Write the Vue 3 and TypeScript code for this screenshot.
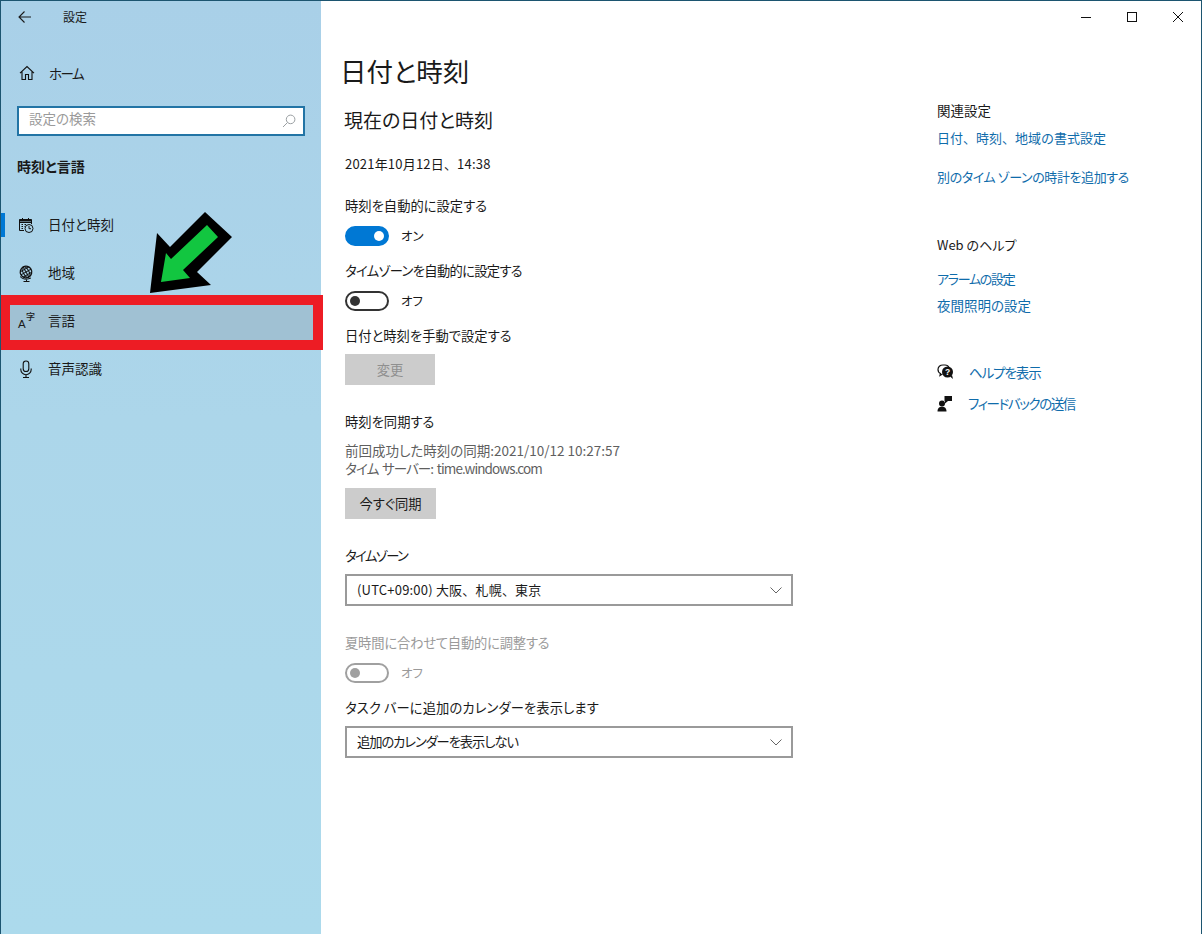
<script setup lang="ts">
const navItems = [
  { id: 'date', label: '日付と時刻', active: true, hover: false },
  { id: 'region', label: '地域', active: false, hover: false },
  { id: 'lang', label: '言語', active: false, hover: true },
  { id: 'voice', label: '音声認識', active: false, hover: false },
]
</script>

<template>
  <div class="window">
    <aside class="side">
      <div class="titlebar">
        <svg class="back" width="16" height="16" viewBox="0 0 16 16"><path d="M14 8H2M7.500 2.500 2 8l5.500 5.500" fill="none" stroke="#1a1a1a" stroke-width="1.100"/></svg>
        <span class="apptitle">設定</span>
      </div>
      <div class="home">
        <svg width="16" height="16" viewBox="0 0 16 16"><path d="M1 8.200 8 1.500l7 6.700M3 6.500V14.500H6.500V9.500H9.500V14.500H13V6.500" fill="none" stroke="#111" stroke-width="1.100"/></svg>
        <span class="home-label">ホーム</span>
      </div>
      <div class="search">
        <span>設定の検索</span>
        <svg width="14" height="14" viewBox="0 0 14 14"><circle cx="8.600" cy="5.400" r="4.300" fill="none" stroke="#9a9fa2"/><path d="M5.500 8.500 1 13" stroke="#9a9fa2"/></svg>
      </div>
      <div class="group">時刻と言語</div>
      <nav class="nav">
        <div v-for="item in navItems" :key="item.id" class="nav-item" :class="{ hover: item.hover }">
          <i v-if="item.active" class="marker"></i>
          <svg v-if="item.id === 'date'" width="16" height="17" viewBox="0 0 16 17" fill="none" stroke="#111"><path d="M6 13.500H1.500V2.500H13.500V7M1.500 5.500H13.500M4.500 1V3M10.500 1V3"/><path d="M1.500 3.500H13.500" stroke-width="2"/><path d="M3.500 7.500h1.500M6.500 7.500H8M3.500 9.500h1.500M6.500 9.500H7M3.500 11.500h1.500" /><circle cx="11" cy="11.500" r="4" fill="#acd4ea"/><path d="M11 9v2.700h2"/></svg>
          <svg v-else-if="item.id === 'region'" width="16" height="17" viewBox="0 0 16 17" fill="none" stroke="#111"><g transform="rotate(-30 8 7)"><circle cx="8" cy="7" r="5.800" stroke-width="1.200"/><ellipse cx="8" cy="7" rx="2.800" ry="5.800"/><path d="M2.200 7h11.600M3 4h10M3 10h10M8 1.200v11.600"/></g><path d="M2 11.500Q6 16 13 13M8.500 14.500v2M5.500 16.500h6"/></svg>
          <svg v-else-if="item.id === 'voice'" width="16" height="18" viewBox="0 0 16 18" fill="none" stroke="#111" stroke-width="1.100"><rect x="5.200" y="1" width="5.600" height="10.500" rx="2.800"/><path d="M2.800 8.500V9.500a5.200 5.200 0 0 0 10.400 0V8.500M8 14.700V17.500M5 17.500h6"/></svg>
          <span v-else class="lang-icon"><b>A</b><em>字</em></span>
          <span class="nav-label">{{ item.label }}</span>
        </div>
      </nav>
    </aside>

    <main class="main">
      <div class="caption">
        <span class="cap"><svg width="12" height="12" viewBox="0 0 12 12"><path d="M1 6.500h10" stroke="#111"/></svg></span>
        <span class="cap"><svg width="12" height="12" viewBox="0 0 12 12"><rect x="1.500" y="1.500" width="9" height="9" fill="none" stroke="#111"/></svg></span>
        <span class="cap"><svg width="12" height="12" viewBox="0 0 12 12"><path d="M1 1l10 10M11 1 1 11" stroke="#111" fill="none"/></svg></span>
      </div>
      <div class="columns">
        <section class="content">
          <h1>日付と時刻</h1>
          <h2>現在の日付と時刻</h2>
          <p class="row now">2021年10月12日、14:38</p>
          <p class="row l1">時刻を自動的に設定する</p>
          <div class="toggle-row"><span class="toggle on"><i></i></span><span class="state">オン</span></div>
          <p class="row l2 tight">タイムゾーンを自動的に設定する</p>
          <div class="toggle-row"><span class="toggle"><i></i></span><span class="state">オフ</span></div>
          <p class="row l2">日付と時刻を手動で設定する</p>
          <button class="btn disabled">変更</button>
          <p class="row l3">時刻を同期する</p>
          <p class="meta first">前回成功した時刻の同期:2021/10/12 10:27:57</p>
          <p class="meta second">タイム サーバー: time.windows.com</p>
          <button class="btn sync">今すぐ同期</button>
          <p class="row l4 tz">タイムゾーン</p>
          <div class="select">
            <span class="tz-value">(UTC+09:00) 大阪、札幌、東京</span>
            <svg width="12" height="7" viewBox="0 0 12 7"><path d="M.5.5 6 6 11.500.5" fill="none" stroke="#666"/></svg>
          </div>
          <p class="row l5 dim dst">夏時間に合わせて自動的に調整する</p>
          <div class="toggle-row dim"><span class="toggle off-dim"><i></i></span><span class="state">オフ</span></div>
          <p class="row l2 task">タスク バーに追加のカレンダーを表示します</p>
          <div class="select">
            <span class="cal-value">追加のカレンダーを表示しない</span>
            <svg width="12" height="7" viewBox="0 0 12 7"><path d="M.5.5 6 6 11.500.5" fill="none" stroke="#666"/></svg>
          </div>
        </section>
        <section class="related">
          <h3>関連設定</h3>
          <a class="link a1">日付、時刻、地域の書式設定</a>
          <a class="link a2">別のタイム ゾーンの時計を追加する</a>
          <h3 class="web">Web のヘルプ</h3>
          <a class="link a3">アラームの設定</a>
          <a class="link a4">夜間照明の設定</a>
          <div class="help first-help">
            <svg width="17" height="16" viewBox="0 0 17 16"><path d="M6 1C3 1 1 3 1 5.500 1 7.500 2 8.800 3.500 9.500L3 11.500l2.500-1.500" fill="none" stroke="#111" stroke-width="1.200"/><path d="M6 1h2c2 0 3.500 1 4 2.500" fill="none" stroke="#111" stroke-width="1.200"/><circle cx="10.500" cy="8" r="5.500" fill="#111"/><path d="M13 12.500 16 15l-1-4z" fill="#111"/><text x="10.500" y="11" font-size="8.500" font-weight="700" text-anchor="middle" fill="#fff" font-family="Liberation Sans">?</text></svg>
            <a class="link h1l">ヘルプを表示</a>
          </div>
          <div class="help second-help">
            <svg width="16" height="17" viewBox="0 0 16 17"><path d="M7.500 1H15V6H11L8 8.500V6H7.500z" fill="#111"/><circle cx="5" cy="8.500" r="3" fill="#111"/><path d="M0.500 16.500c0-3.500 2-4.800 4.500-4.800s4.500 1.300 4.500 4.800z" fill="#111"/></svg>
            <a class="link h2l">フィードバックの送信</a>
          </div>
        </section>
      </div>
    </main>

    <div class="callout" aria-hidden="true"></div>
    <svg class="arrow" width="100" height="100" viewBox="0 0 100 100" aria-hidden="true">
      <path d="M10 83 17 23 30 37 65 2 92 27 57 62 71 75z" fill="#000"/>
      <path d="M67 15 78 27 43 60 50 68 21 72 26 43 31 49z" fill="#12c640"/>
    </svg>
  </div>
</template>

<style>
html, body { margin: 0; background: #fff; }
</style>

<style scoped>
* { box-sizing: border-box; }
.window {
  position: relative;
  width: 1202px;
  height: 934px;
  display: flex;
  overflow: hidden;
  border: 1px solid #1c5570;
  border-bottom: 0;
  background: #fff;
  font-family: "Noto Sans CJK JP", "Noto Sans", sans-serif;
  font-feature-settings: "palt";
  font-size: 13.300px;
  color: #1a1a1a;
}
.side {
  width: 320px;
  flex: none;
  background: linear-gradient(180deg, #a9d0e8 0%, #acd6ea 45%, #acdaec 100%);
}
.titlebar { height: 32px; display: flex; align-items: center; padding-left: 16px; }
.apptitle { margin: -2px 0 0 30px; font-size: 12px; }
.home { height: 48px; margin-top: 16px; display: flex; align-items: center; padding-left: 18px; gap: 14px; font-size: 13.500px; }
.home-label { letter-spacing: -1.500px; }
.search {
  margin: 9px 16px 0 16px;
  height: 30px;
  border: 2px solid #2274a5;
  background: #fff;
  display: flex;
  align-items: center;
  justify-content: space-between;
  padding: 0 7px 0 10px;
  color: #9a9a9a;
  font-size: 13.500px;
}
.search span { margin-top: -6px; }
.group { margin: 17px 0 0 16px; height: 26px; line-height: 26px; font-size: 14px; font-weight: 700; }
.nav { margin-top: 22px; }
.nav-item { position: relative; height: 48px; display: flex; align-items: center; padding-left: 17px; gap: 14px; font-size: 13.500px; }
.nav-item.hover { background: #a0c1d3; }
.marker { position: absolute; left: 0; top: 12px; width: 4px; height: 24px; background: #0078d4; }
.nav-label { margin-top: -2px; }
.lang-icon { position: relative; width: 16px; height: 16px; display: block; }
.lang-icon b { position: absolute; left: 0; top: 5px; font: 400 11.500px/12px "Liberation Sans", sans-serif; }
.lang-icon em { position: absolute; left: 8px; top: -1px; font-style: normal; font-size: 9px; font-weight: 500; line-height: 10px; }

.main { flex: 1; min-width: 0; display: flex; flex-direction: column; }
.caption { height: 32px; display: flex; justify-content: flex-end; }
.cap { width: 46px; height: 32px; display: flex; align-items: center; justify-content: center; }
.columns { display: flex; }
.content { width: 616px; flex: none; padding-left: 24px; display: flex; flex-direction: column; align-items: flex-start; }
h1 { margin: 18px 0 0 -5px; height: 40px; line-height: 40px; font-size: 26.500px; font-weight: 400; }
h2 { margin: 15px 0 0 -1px; height: 28px; line-height: 28px; font-size: 19px; font-weight: 400; }
p { margin: 0; }
.row { height: 20px; line-height: 20px; }
.now { margin-top: 20px; font-feature-settings: normal; font-size: 13px; letter-spacing: .2px; }
.l1 { margin-top: 22px; }
.l2 { margin-top: 15px; }
.l3 { margin-top: 27px; }
.l4 { margin-top: 27px; }
.l5 { margin-top: 27px; }
.tight { letter-spacing: -.7px; }
.tz { letter-spacing: -1.600px; }
.dst { letter-spacing: -.2px; }
.task { letter-spacing: .1px; }
.toggle-row { height: 20px; margin-top: 10px; display: flex; align-items: center; gap: 12px; }
.state { font-size: 12.500px; margin-top: -2px; }
.toggle { width: 44px; height: 20px; border-radius: 10px; border: 2px solid #333; position: relative; display: block; }
.toggle i { position: absolute; left: 3px; top: 3px; width: 10px; height: 10px; border-radius: 50%; background: #333; }
.toggle.on { background: #0078d4; border-color: #0078d4; }
.toggle.on i { left: auto; right: 3px; background: #fff; }
.toggle.off-dim { border-color: #a0a0a0; }
.toggle.off-dim i { background: #a0a0a0; }
.dim { color: #9a9a9a; }
.btn { border: 0; font: inherit; font-feature-settings: inherit; height: 31px; background: #ccc; color: #1a1a1a; padding: 0; }
.btn.disabled { width: 90px; margin-top: 8px; color: #8f8f8f; }
.btn.sync { width: 91px; margin-top: 11px; }
.meta { height: 18px; line-height: 18px; color: #5f5f5f; font-size: 13.500px; }
.meta.first { margin-top: 9px; }
.meta.second { letter-spacing: -.9px; word-spacing: 1.500px; }
.select {
  width: 448px;
  height: 32px;
  margin-top: 8px;
  border: 2px solid #9a9a9a;
  display: flex;
  align-items: center;
  justify-content: space-between;
  padding: 0 9px 0 10px;
}
.select span { margin-top: -2px; }
.tz-value { font-feature-settings: normal; font-size: 13px; letter-spacing: .2px; }
.cal-value { letter-spacing: -1.100px; }
.related { width: 240px; display: flex; flex-direction: column; align-items: flex-start; }
h3 { margin: 66px 0 0; height: 22px; line-height: 22px; font-size: 13.500px; font-weight: 400; }
h3.web { margin-top: 46px; font-size: 13px; }
.link { color: #0f6cab; font-size: 13.500px; height: 22px; line-height: 22px; }
.a1 { margin-top: 6px; font-feature-settings: normal; font-size: 13px; }
.a2 { margin-top: 17px; font-size: 13px; letter-spacing: -.4px; }
.a3 { margin-top: 12px; font-size: 13px; letter-spacing: -1.300px; }
.a4 { margin-top: 4px; }
.help { display: flex; align-items: center; gap: 15px; height: 22px; }
.h1l { letter-spacing: -1.100px; }
.h2l { letter-spacing: -1.400px; }
.first-help { margin-top: 45px; }
.second-help { margin-top: 9px; }

.callout {
  position: absolute;
  left: -1px;
  top: 294px;
  width: 323px;
  height: 55px;
  border: 10px solid #ed1c24;
}
.arrow { position: absolute; left: 139px; top: 209px; }
</style>
